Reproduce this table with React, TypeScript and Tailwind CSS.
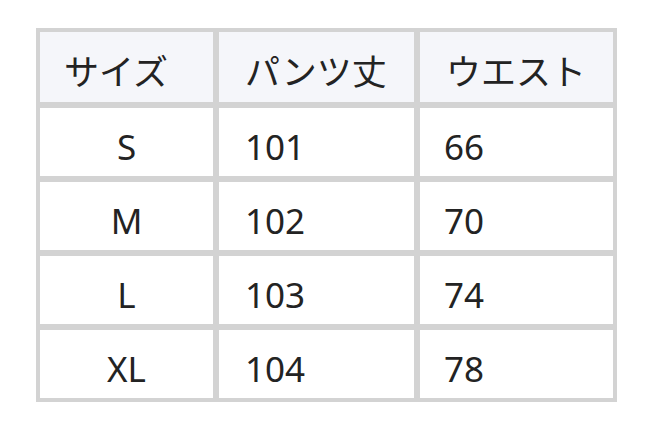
import React from "react";

const rows = [
  ["S", "101", "66"],
  ["M", "102", "70"],
  ["L", "103", "74"],
  ["XL", "104", "78"],
];

export default function App() {
  return (
    <div
      className="w-[652px] h-[429px] bg-white pt-[28px] pl-[36px] text-[#232323]"
      style={{ fontFamily: '"Noto Sans", "Noto Sans CJK JP", sans-serif' }}
    >
      <div className="grid w-[581px] grid-cols-[173px_195px_193px] grid-rows-[70px_68px_68px_68px_68px] gap-[6px] bg-[#d3d3d3] p-[4px] text-[35px] leading-none">
        <div className="flex items-center bg-[#f5f6fa] pl-[24px] pt-[8px]">サイズ</div>
        <div className="flex items-center bg-[#f5f6fa] pl-[26px] pt-[8px]">パンツ丈</div>
        <div className="flex items-center bg-[#f5f6fa] pl-[26px] pt-[8px]">ウエスト</div>
        {rows.map((r) => (
          <React.Fragment key={r[0]}>
            <div className="flex items-center justify-center bg-white pt-[9px]">{r[0]}</div>
            <div className="flex items-center bg-white pl-[26px] pt-[9px]">{r[1]}</div>
            <div className="flex items-center bg-white pl-[24px] pt-[9px]">{r[2]}</div>
          </React.Fragment>
        ))}
      </div>
    </div>
  );
}
